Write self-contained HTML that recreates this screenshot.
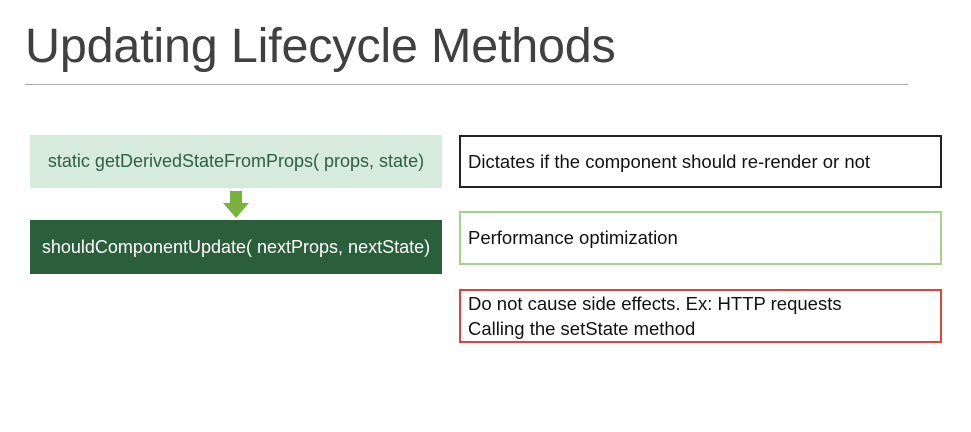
<html><head><style>
body{margin:0;width:971px;height:432px;background:#fff;font-family:"Liberation Sans",sans-serif;position:relative;overflow:hidden}
.t{position:absolute;left:25px;top:18px;font-size:48.5px;color:#404040;letter-spacing:-0.2px}
.ln{position:absolute;left:25px;top:84px;width:883px;height:1px;background:#aaa}
.b{position:absolute;box-sizing:border-box;display:flex;align-items:center;font-size:18px}
.l{left:30px;width:412px;justify-content:center}
.r{left:459px;width:483px;padding-left:7px;color:#111;font-size:18.5px}
</style></head><body>
<div class="t">Updating Lifecycle Methods</div>
<div class="ln"></div>
<div class="b l" style="top:135px;height:53px;background:#d6eadd;color:#2f5f42">static getDerivedStateFromProps( props, state)</div>
<svg style="position:absolute;left:222px;top:191px" width="28" height="27"><path d="M8 0H20V12H27L14 27L1 12H8Z" fill="#78b340"/></svg>
<div class="b l" style="top:220px;height:54px;background:#2b5e3a;color:#fff">shouldComponentUpdate( nextProps, nextState)</div>
<div class="b r" style="top:135px;height:53px;border:2px solid #222">Dictates if the component should re-render or not</div>
<div class="b r" style="top:211px;height:54px;border:2px solid #a8d08d">Performance optimization</div>
<div class="b r" style="top:289px;height:54px;border:2px solid #d9443c;line-height:25px">Do not cause side effects. Ex: HTTP requests<br>Calling the setState method</div>
</body></html>
